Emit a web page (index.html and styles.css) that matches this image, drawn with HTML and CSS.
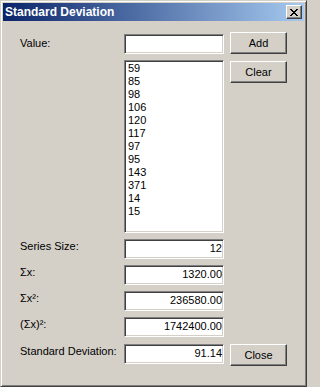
FILE: index.html
```html
<!DOCTYPE html>
<html>
<head>
<meta charset="utf-8">
<title>Standard Deviation</title>
<link rel="stylesheet" href="styles.css">
</head>
<body>
<div class="window">
  <div class="titlebar">
    <span class="title">Standard Deviation</span>
    <button class="title-close" aria-label="Close">
      <svg width="8" height="7" viewBox="0 0 8 7" shape-rendering="crispEdges" fill="#000">
        <path d="M0 0h2v1h-2z M6 0h2v1h-2z M1 1h2v1h-2z M5 1h2v1h-2z M2 2h4v1h-4z M3 3h2v1h-2z M2 4h4v1h-4z M1 5h2v1h-2z M5 5h2v1h-2z M0 6h2v1h-2z M6 6h2v1h-2z"/>
      </svg>
    </button>
  </div>
  <div class="client">
    <span class="lbl lbl-value">Value:</span>
    <div class="field field-value"></div>
    <button class="btn">Add</button>

    <div class="listbox">
      <div class="item">59</div>
      <div class="item">85</div>
      <div class="item">98</div>
      <div class="item">106</div>
      <div class="item">120</div>
      <div class="item">117</div>
      <div class="item">97</div>
      <div class="item">95</div>
      <div class="item">143</div>
      <div class="item">371</div>
      <div class="item">14</div>
      <div class="item">15</div>
    </div>
    <button class="btn btn-clear">Clear</button>

    <span class="lbl">Series Size:</span>
    <div class="field">12</div>

    <span class="lbl">Σx:</span>
    <div class="field">1320.00</div>

    <span class="lbl">Σx²:</span>
    <div class="field">236580.00</div>

    <span class="lbl">(Σx)²:</span>
    <div class="field">1742400.00</div>

    <span class="lbl lbl-sd">Standard Deviation:</span>
    <div class="field field-sd">91.14</div>
    <button class="btn btn-close">Close</button>
  </div>
</div>
</body>
</html>
```

FILE: styles.css
```css
html, body {
  margin: 0;
  padding: 0;
  background: #d4d0c8;
}

.window {
  box-sizing: border-box;
  width: 307px;
  height: 387px;
  background: #d4d0c8;
  border: 1px solid;
  border-color: #d4d0c8 #404040 #404040 #d4d0c8;
  box-shadow: inset 1px 1px #ffffff, inset -1px -1px #808080;
  padding: 2px;
  font-family: "Liberation Sans", Arial, sans-serif;
  font-size: 11px;
  color: #000;
}

.titlebar {
  height: 18px;
  display: flex;
  align-items: center;
  justify-content: space-between;
  background: linear-gradient(to right, #0a246a, #a6caf0);
  padding: 0 2px 0 2px;
}

.title {
  color: #fff;
  font-weight: bold;
  font-size: 12px;
  line-height: 18px;
  white-space: nowrap;
}

.title-close {
  box-sizing: border-box;
  width: 16px;
  height: 14px;
  margin: 0;
  padding: 0;
  display: flex;
  align-items: center;
  justify-content: center;
  background: #d4d0c8;
  border: 1px solid;
  border-color: #ffffff #404040 #404040 #ffffff;
  box-shadow: inset -1px -1px #808080;
}

.client {
  display: grid;
  grid-template-columns: 98px 100px 57px;
  grid-template-rows: 22px 173px 20px 20px 20px 20px 23px;
  column-gap: 6px;
  row-gap: 6px;
  align-items: start;
  padding: 11px 0 0 17px;
}

.lbl {
  grid-column: 1;
  line-height: 13px;
  margin-top: 1px;
  white-space: nowrap;
}

.lbl-value {
  margin-top: 5px;
}

.lbl-sd {
  margin-top: 2px;
}

.field {
  box-sizing: border-box;
  height: 20px;
  background: #fff;
  border: 1px solid;
  border-color: #808080 #ffffff #ffffff #808080;
  box-shadow: inset 1px 1px #404040, inset -1px -1px #d4d0c8;
  text-align: right;
  line-height: 13px;
  padding: 2px 1px 0 0;
}

.field-value {
  margin-top: 2px;
}

.field-sd {
  margin-top: 1px;
}

.listbox {
  grid-column: 2;
  box-sizing: border-box;
  height: 173px;
  background: #fff;
  border: 1px solid;
  border-color: #808080 #ffffff #ffffff #808080;
  box-shadow: inset 1px 1px #404040, inset -1px -1px #d4d0c8;
  padding: 1px 0 0 3px;
}

.item {
  line-height: 13px;
}

.btn {
  box-sizing: border-box;
  width: 57px;
  height: 22px;
  margin: 0;
  padding: 0;
  font-family: "Liberation Sans", Arial, sans-serif;
  font-size: 11px;
  color: #000;
  background: #d4d0c8;
  border: 1px solid;
  border-color: #ffffff #404040 #404040 #ffffff;
  box-shadow: inset -1px -1px #808080;
  text-align: center;
  line-height: 18px;
}

.btn-clear {
  margin-top: 1px;
}

.btn-close {
  margin-top: 1px;
}
```
